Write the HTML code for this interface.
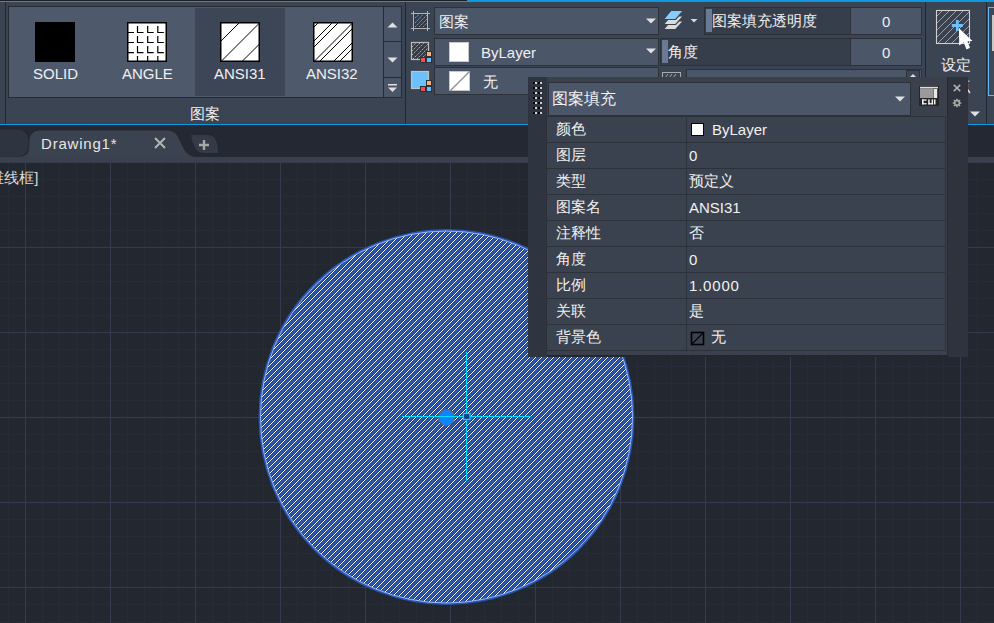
<!DOCTYPE html>
<html><head><meta charset="utf-8">
<style>
*{box-sizing:border-box;margin:0;padding:0}
html,body{width:994px;height:623px;overflow:hidden;background:#222730;font-family:"Liberation Sans",sans-serif;color:#f0f0f0}
.a{position:absolute}
.t{position:absolute;white-space:nowrap;line-height:1;font-size:15px}
#grid{left:0;top:162px;width:994px;height:461px;
background-image:
linear-gradient(to right,#353a4c 1px,transparent 1px),
linear-gradient(to bottom,#353a4c 1px,transparent 1px),
linear-gradient(to right,#272c39 1px,transparent 1px),
linear-gradient(to bottom,#262b37 1px,transparent 1px);
background-size:85px 85px,85px 85px,17px 17px,17px 17px;
background-position:25px 0px,25px 0px,8px 0px,8px 0px}
</style></head><body>
<!-- drawing area -->
<div id="grid" class="a"></div>
<div class="t" style="left:-30px;top:170px;font-size:15px;color:#dadada">[二维线框]</div>

<!-- hatch circle -->
<svg class="a" style="left:0;top:0" width="994" height="623">
 <defs>
  <pattern id="hp" patternUnits="userSpaceOnUse" width="6" height="6" x="0" y="0"><rect x="0" y="0" width="1" height="1" fill="#2752ac"/><rect x="0" y="1" width="1" height="1" fill="#2e5ec6"/><rect x="0" y="2" width="1" height="1" fill="#254ea5"/><rect x="0" y="3" width="1" height="1" fill="#143c94"/><rect x="0" y="4" width="1" height="1" fill="#ffffff"/><rect x="0" y="5" width="1" height="1" fill="#173f9a"/><rect x="1" y="0" width="1" height="1" fill="#2e5ec6"/><rect x="1" y="1" width="1" height="1" fill="#254ea5"/><rect x="1" y="2" width="1" height="1" fill="#143c94"/><rect x="1" y="3" width="1" height="1" fill="#ffffff"/><rect x="1" y="4" width="1" height="1" fill="#173f9a"/><rect x="1" y="5" width="1" height="1" fill="#2752ac"/><rect x="2" y="0" width="1" height="1" fill="#254ea5"/><rect x="2" y="1" width="1" height="1" fill="#143c94"/><rect x="2" y="2" width="1" height="1" fill="#ffffff"/><rect x="2" y="3" width="1" height="1" fill="#173f9a"/><rect x="2" y="4" width="1" height="1" fill="#2752ac"/><rect x="2" y="5" width="1" height="1" fill="#2e5ec6"/><rect x="3" y="0" width="1" height="1" fill="#143c94"/><rect x="3" y="1" width="1" height="1" fill="#ffffff"/><rect x="3" y="2" width="1" height="1" fill="#173f9a"/><rect x="3" y="3" width="1" height="1" fill="#2752ac"/><rect x="3" y="4" width="1" height="1" fill="#2e5ec6"/><rect x="3" y="5" width="1" height="1" fill="#254ea5"/><rect x="4" y="0" width="1" height="1" fill="#ffffff"/><rect x="4" y="1" width="1" height="1" fill="#173f9a"/><rect x="4" y="2" width="1" height="1" fill="#2752ac"/><rect x="4" y="3" width="1" height="1" fill="#2e5ec6"/><rect x="4" y="4" width="1" height="1" fill="#254ea5"/><rect x="4" y="5" width="1" height="1" fill="#143c94"/><rect x="5" y="0" width="1" height="1" fill="#173f9a"/><rect x="5" y="1" width="1" height="1" fill="#2752ac"/><rect x="5" y="2" width="1" height="1" fill="#2e5ec6"/><rect x="5" y="3" width="1" height="1" fill="#254ea5"/><rect x="5" y="4" width="1" height="1" fill="#143c94"/><rect x="5" y="5" width="1" height="1" fill="#ffffff"/></pattern>
  <clipPath id="cc"><circle cx="446.5" cy="417" r="186.5"/></clipPath>
 </defs>
 <rect x="250" y="220" width="400" height="400" fill="url(#hp)" clip-path="url(#cc)" shape-rendering="crispEdges"/>
 <circle cx="446.5" cy="417" r="187" fill="none" stroke="#2b56b0" stroke-width="2"/>
 <circle cx="446.5" cy="417" r="186" fill="none" stroke="#8fb8ff" stroke-width="1"/>
 <!-- crosshair -->
 <circle cx="446.5" cy="417.5" r="8" fill="#0a84ff" stroke="#6a6660" stroke-width="1"/>
 <g fill="#00e0ff">
  <rect x="402" y="416" width="129" height="1"/>
  <rect x="466" y="352" width="1" height="129"/>
 </g>
 <rect x="463.5" y="413.5" width="6.5" height="6" fill="#1d3a86" stroke="#00e0ff" stroke-width="1.2"/>
</svg>

<!-- tab bar -->
<div class="a" style="left:0;top:125px;width:994px;height:37px;background:#232833"></div>
<div class="a" style="left:0;top:157px;width:994px;height:5px;background:#3a414e"></div>
<svg class="a" style="left:0;top:125px" width="260" height="37">
 <path d="M-20 4.5 H16 Q28.5 4.5 28.5 18 Q28.5 31.8 16 31.8 H-20 Z" fill="#2e3440"/>
 <path d="M18 32 Q28 32 29 24 L29.5 15 Q30.5 5.5 40 5.5 H168 Q176 5.5 180 16 Q186 32 196 32 Z" fill="#3b4250"/>
 <path d="M191 10 H208 Q218 10 218 28 H204 Q194 28 191 10 Z" fill="#343a47"/>
</svg>
<div class="t" style="left:41px;top:136px;font-size:15px;letter-spacing:0.8px;color:#e6e6e6">Drawing1*</div>
<svg class="a" style="left:153px;top:136px" width="14" height="14"><path d="M2 2 L12 12 M12 2 L2 12" stroke="#b4b4b4" stroke-width="2"/></svg>
<svg class="a" style="left:198px;top:139px" width="12" height="12"><path d="M6 1 V11 M1 6 H11" stroke="#a8a8a8" stroke-width="2.4"/></svg>

<!-- ribbon -->

<div id="ribbon" class="a" style="left:0;top:0;width:994px;height:125px;background:#3b4452">
 <div class="a" style="left:0;top:0;width:467px;height:1px;background:#1d1f26"></div>
 <div class="a" style="left:467px;top:0;width:527px;height:1px;background:#0f98de"></div>
 <div class="a" style="left:0;top:1px;width:994px;height:1px;background:#0f98de"></div>
 <div class="a" style="left:0;top:124px;width:994px;height:1px;background:#0f98de"></div>
 <!-- panel separators -->
 <div class="a" style="left:5px;top:2px;width:1px;height:122px;background:#23272f"></div>
 <div class="a" style="left:405px;top:2px;width:1px;height:122px;background:#23272f"></div>
 <div class="a" style="left:925px;top:2px;width:1px;height:122px;background:#23272f"></div>
 <div class="a" style="left:986px;top:2px;width:1px;height:122px;background:#23272f"></div>
 <!-- gallery -->
 <div class="a" style="left:8px;top:6px;width:394px;height:92px;background:#262a33"></div>
 <div class="a" style="left:9px;top:7px;width:374px;height:90px;background:#4e5a6c"></div>
 <div class="a" style="left:195px;top:8px;width:90px;height:88px;background:#3d4656"></div>
 <div class="a" style="left:384px;top:7px;width:17px;height:34px;background:#4a5568"></div>
 <div class="a" style="left:384px;top:42px;width:17px;height:35px;background:#4a5568"></div>
 <div class="a" style="left:384px;top:78px;width:17px;height:19px;background:#4a5568"></div>
 <svg class="a" style="left:384px;top:7px" width="17" height="90">
  <path d="M3.5 20.5 L8.5 15.5 L13.5 20.5 Z" fill="#e0e0e0"/>
  <path d="M3.5 50.5 L8.5 55.5 L13.5 50.5 Z" fill="#e0e0e0"/>
  <rect x="4" y="77" width="9" height="1.5" fill="#e0e0e0"/>
  <path d="M4 80.5 L8.5 85 L13 80.5 Z" fill="#e0e0e0"/>
 </svg>
 <!-- gallery icons -->
 <div class="a" style="left:35px;top:22px;width:40px;height:40px;background:#000"></div>
 <svg class="a" style="left:127px;top:22px" width="40" height="40">
  <rect x="0.75" y="0.75" width="38.5" height="38.5" fill="#fff" stroke="#000" stroke-width="1.5"/>
  <g stroke="#000" stroke-width="1.2" fill="none">
   <path d="M10.5 4 V10.5 H16.5 M20.7 4 V10.5 H26.7 M30.8 4 V10.5 H36.8"/>
   <path d="M10.5 14 V20.5 H16.5 M20.7 14 V20.5 H26.7 M30.8 14 V20.5 H36.8"/>
   <path d="M10.5 24 V30.6 H16.5 M20.7 24 V30.6 H26.7 M30.8 24 V30.6 H36.8"/>
   <path d="M0 10.5 H7 M0 20.5 H7 M0 30.6 H7"/>
   <path d="M10.5 34 V40 M20.7 34 V40 M30.8 34 V40"/>
  </g>
 </svg>
 <svg class="a" style="left:220px;top:22px" width="40" height="40">
  <rect x="0.75" y="0.75" width="38.5" height="38.5" fill="#fff" stroke="#000" stroke-width="1.5"/>
  <g stroke="#000" stroke-width="1"><path d="M0.5 19.5 L19.5 0.5 M0.5 40 L40 0.5 M21.5 40 L40 21.5"/></g>
 </svg>
 <svg class="a" style="left:313px;top:22px" width="40" height="40">
  <rect x="0.75" y="0.75" width="38.5" height="38.5" fill="#fff" stroke="#000" stroke-width="1.5"/>
  <g stroke="#000" stroke-width="1"><path d="M0.5 5.5 L5.5 0.5 M0.5 19.5 L19.5 0.5 M0.5 25.5 L25.5 0.5 M0.5 40 L40 0.5 M6 40 L40 6 M20 40 L40 20 M26 40 L40 26"/></g>
 </svg>
 <div class="t" style="left:33px;top:66px">SOLID</div>
 <div class="t" style="left:122px;top:66px">ANGLE</div>
 <div class="t" style="left:214px;top:66px">ANSI31</div>
 <div class="t" style="left:306px;top:66px">ANSI32</div>
 <div class="t" style="left:190px;top:106px">图案</div>

 <!-- panel 2 -->
 <svg class="a" style="left:406px;top:6px" width="30" height="30" shape-rendering="crispEdges">
  <rect x="8" y="8" width="13" height="14" fill="#343a46"/>
  <g fill="#b4b4b4"><rect x="7" y="5" width="1" height="20"/><rect x="21" y="5" width="1" height="20"/><rect x="5" y="7" width="19" height="1"/><rect x="5" y="22" width="19" height="1"/></g>
 </svg>
 <svg class="a" style="left:406px;top:6px" width="30" height="30">
  <g stroke="#5ab0f0" stroke-width="1" stroke-dasharray="2 1"><path d="M9 12 L13 8.5 M9 17 L17 8.5 M9 21 L21 9 M13 21 L21 13 M17 21 L21 17"/></g>
 </svg>
 <div class="a" style="left:434px;top:7px;width:225px;height:28px;background:#2b3039"></div>
 <div class="a" style="left:435px;top:8px;width:223px;height:26px;background:#4b5669"></div>
 <div class="a" style="left:434px;top:38px;width:225px;height:28px;background:#2b3039"></div>
 <div class="a" style="left:435px;top:39px;width:223px;height:26px;background:#4b5669"></div>
 <div class="a" style="left:434px;top:67px;width:225px;height:28px;background:#2b3039"></div>
 <div class="a" style="left:435px;top:68px;width:223px;height:26px;background:#4b5669"></div>
 <svg class="a" style="left:600px;top:0" width="100" height="60">
  <path d="M46 18.5 L56 18.5 L51 23.5 Z" fill="#e0e0e0"/>
  <path d="M46 48.5 L56 48.5 L51 53.5 Z" fill="#e0e0e0"/>
  <path d="M90.5 19 L97.5 19 L94 22.5 Z" fill="#d8d8d8"/>
 </svg>
 <div class="t" style="left:439px;top:14px">图案</div>
 <div class="a" style="left:449px;top:42px;width:20px;height:20px;background:#fff;border:1px solid #c8c8c8"></div>
 <div class="t" style="left:481px;top:45px">ByLayer</div>
 <svg class="a" style="left:449px;top:71px" width="22" height="21">
  <rect x="0.5" y="0.5" width="20" height="19" fill="#fff" stroke="#c8c8c8"/>
  <path d="M1 20 L21 0" stroke="#8a8a8a" stroke-width="1.2"/>
 </svg>
 <div class="t" style="left:483px;top:74px">无</div>
 <!-- left icons row 2/3 -->
 <svg class="a" style="left:406px;top:37px" width="30" height="30">
  <rect x="5.5" y="5.5" width="17" height="17" fill="#363b45" stroke="#bcbcbc" stroke-width="1.2"/>
  <g stroke="#c8c8c8" stroke-width="0.9" stroke-dasharray="1.5 1"><path d="M6 10 L10 6 M6 14 L14 6 M6 18 L18 6 M7 22 L22 7 M11 22 L22 11 M15 22 L22 15"/></g>
  <g stroke="#2a2f38" stroke-width="1">
  <rect x="20.5" y="14.5" width="5" height="5" fill="#f5b078"/>
  <rect x="14.5" y="20.5" width="5" height="5" fill="#f05050"/>
  <rect x="20.5" y="20.5" width="5" height="5" fill="#64befc"/></g>
 </svg>
 <svg class="a" style="left:406px;top:66px" width="30" height="30">
  <rect x="5.5" y="5.5" width="17" height="17" fill="#6cc0fc" stroke="#c4c4c4" stroke-width="1.2"/>
  <g stroke="#2a2f38" stroke-width="1">
  <rect x="20.5" y="14.5" width="5" height="5" fill="#f5b078"/>
  <rect x="14.5" y="20.5" width="5" height="5" fill="#f05050"/>
  <rect x="20.5" y="20.5" width="5" height="5" fill="#64befc"/></g>
 </svg>
 <!-- layers icon -->
 <svg class="a" style="left:660px;top:6px" width="40" height="28">
  <g stroke="#3b4452" stroke-width="1.2">
  <path d="M10.8 15 H23.5 L15.7 23.5 H3.3 Z" fill="#dcdcdc"/>
  <path d="M10.8 10 H23.5 L15.7 18.5 H3.3 Z" fill="#dcdcdc"/>
  <path d="M10.8 4.5 H23.5 L15.7 13.5 H3.3 Z" fill="#88ccfa"/>
  </g>
 </svg>
 <!-- sliders -->
 <div class="a" style="left:704px;top:7px;width:218px;height:28px;background:#2b3039"></div>
 <div class="a" style="left:705px;top:8px;width:145px;height:26px;background:#373e4b"></div>
 <div class="a" style="left:851px;top:8px;width:70px;height:26px;background:#4b5669"></div>
 <div class="a" style="left:706px;top:9px;width:6px;height:23px;background:#6b7a94"></div>
 <div class="t" style="left:712px;top:13px">图案填充透明度</div>
 <div class="t" style="left:882px;top:14px">0</div>
 <div class="a" style="left:660px;top:38px;width:262px;height:28px;background:#2b3039"></div>
 <div class="a" style="left:661px;top:39px;width:189px;height:26px;background:#373e4b"></div>
 <div class="a" style="left:851px;top:39px;width:70px;height:26px;background:#4b5669"></div>
 <div class="a" style="left:662px;top:40px;width:6px;height:23px;background:#6b7a94"></div>
 <div class="t" style="left:668px;top:44px">角度</div>
 <div class="t" style="left:882px;top:45px">0</div>
 <svg class="a" style="left:661px;top:71px" width="22" height="8"><rect x="1.5" y="1.5" width="18" height="8" fill="none" stroke="#aaa"/><path d="M4 7 L7 3 M8 7 L11 3 M12 7 L15 3" stroke="#aaa"/></svg>
 <div class="a" style="left:686px;top:69px;width:236px;height:10px;background:#2b3039"></div>
 <div class="a" style="left:687px;top:70px;width:234px;height:9px;background:#4b5669"></div>
 <div class="a" style="left:906px;top:70px;width:14px;height:9px;background:#3e4757;border:1px solid #2b3039"></div>
 <svg class="a" style="left:906px;top:70px" width="14" height="9"><path d="M4 7 L7 4 L10 7 Z" fill="#ddd"/></svg>

 <!-- panel 3 -->
 <svg class="a" style="left:935px;top:9px" width="40" height="42">
  <rect x="1.5" y="1.5" width="33" height="33" fill="#3a4150" stroke="#d0d0d0" stroke-width="1.1"/>
  <g stroke="#b4b4b4" stroke-width="0.85"><path d="M2 7 L7 2 M2 14 L14 2 M2 21 L21 2 M2 28 L28 2 M3 34 L34 3 M10 34 L34 10 M17 34 L34 17 M24 34 L34 24 M31 34 L34 31"/></g>
  <path d="M16.8 16.5 H27.8 M22.3 11 V22" stroke="#6ec0f8" stroke-width="2.8"/>
  <path d="M24 19.3 L24.2 36.5 L28.7 33.3 L31.5 40.5 L35 38.8 L32.3 32.3 L37.5 32.1 Z" fill="#fff"/>
 </svg>
 <div class="t" style="left:941px;top:57px">设定</div>
 <div class="t" style="left:941px;top:78px">原点</div>
 <svg class="a" style="left:968px;top:108px" width="14" height="10"><path d="M2 3.5 L12 3.5 L7 8.5 Z" fill="#e0e0e0"/></svg>
 <!-- panel 4 -->
 <div class="a" style="left:988px;top:7px;width:10px;height:89px;border:1px solid #62b4f4;background:#3d4858"></div>
 <div class="a" style="left:992px;top:15px;width:4px;height:36px;background:#c8c8c8"></div>
</div>

<!-- properties palette -->
<div id="pal" class="a" style="left:0;top:0">
 <div class="a" style="left:528px;top:77px;width:19px;height:280px;background:#2f3540"></div>
 <div class="a" style="left:547px;top:77px;width:400px;height:278px;background:#3a414d"></div>
 <div class="a" style="left:947px;top:77px;width:1px;height:280px;background:#262a32"></div>
 <div class="a" style="left:547px;top:355px;width:401px;height:2px;background:#212630"></div>
 <div class="a" style="left:948px;top:77px;width:20px;height:280px;background:#2e333d"></div>
 <svg class="a" style="left:530px;top:80px" width="16" height="36">
  <rect x="3" y="2" width="2" height="2" fill="#000"/><rect x="5" y="2" width="2" height="2" fill="#d0d0d0"/><rect x="8" y="2" width="2" height="2" fill="#000"/><rect x="10" y="2" width="2" height="2" fill="#d0d0d0"/><rect x="3" y="7" width="2" height="2" fill="#000"/><rect x="5" y="7" width="2" height="2" fill="#d0d0d0"/><rect x="8" y="7" width="2" height="2" fill="#000"/><rect x="10" y="7" width="2" height="2" fill="#d0d0d0"/><rect x="3" y="12" width="2" height="2" fill="#000"/><rect x="5" y="12" width="2" height="2" fill="#d0d0d0"/><rect x="8" y="12" width="2" height="2" fill="#000"/><rect x="10" y="12" width="2" height="2" fill="#d0d0d0"/><rect x="3" y="17" width="2" height="2" fill="#000"/><rect x="5" y="17" width="2" height="2" fill="#d0d0d0"/><rect x="8" y="17" width="2" height="2" fill="#000"/><rect x="10" y="17" width="2" height="2" fill="#d0d0d0"/><rect x="3" y="22" width="2" height="2" fill="#000"/><rect x="5" y="22" width="2" height="2" fill="#d0d0d0"/><rect x="8" y="22" width="2" height="2" fill="#000"/><rect x="10" y="22" width="2" height="2" fill="#d0d0d0"/><rect x="3" y="27" width="2" height="2" fill="#000"/><rect x="5" y="27" width="2" height="2" fill="#d0d0d0"/><rect x="8" y="27" width="2" height="2" fill="#000"/><rect x="10" y="27" width="2" height="2" fill="#d0d0d0"/><rect x="3" y="32" width="2" height="2" fill="#000"/><rect x="5" y="32" width="2" height="2" fill="#d0d0d0"/><rect x="8" y="32" width="2" height="2" fill="#000"/><rect x="10" y="32" width="2" height="2" fill="#d0d0d0"/>
 </svg>
 <div class="a" style="left:548px;top:82px;width:363px;height:34px;background:#2b3039"></div>
 <div class="a" style="left:549px;top:83px;width:361px;height:32px;background:#4b5669"></div>
 <div class="t" style="left:552px;top:91px;font-size:16px">图案填充</div>
 <svg class="a" style="left:890px;top:90px" width="20" height="20"><path d="M5 6.5 L15 6.5 L10 11.5 Z" fill="#e0e0e0"/></svg>
 <svg class="a" style="left:919px;top:86px" width="20" height="20">
  <rect x="0" y="0" width="20" height="20" rx="1" fill="#262626"/>
  <rect x="1" y="0.8" width="18" height="1.6" fill="#dedede"/>
  <rect x="1" y="2.4" width="13.5" height="9.6" fill="#9a9a9a"/>
  <rect x="14.8" y="3" width="3.4" height="9" fill="#e6e6e6"/>
  <g fill="#f0f0f0">
   <rect x="3" y="13.4" width="1.6" height="5"/><rect x="3" y="13.4" width="4.6" height="1.3"/><rect x="3" y="17.1" width="4.6" height="1.3"/>
   <rect x="9.2" y="13.4" width="1.5" height="5"/><rect x="12.6" y="13.4" width="1.5" height="5"/><rect x="9.2" y="17.1" width="4.9" height="1.3"/>
   <rect x="15" y="13.4" width="1.5" height="5"/>
  </g>
 </svg>
 <svg class="a" style="left:952px;top:83px" width="12" height="26">
  <path d="M1.8 1.8 L8.2 8.2 M8.2 1.8 L1.8 8.2" stroke="#ababab" stroke-width="1.7"/>
  <circle cx="5" cy="20" r="2.3" fill="none" stroke="#a8a8a8" stroke-width="1.7"/>
  <path d="M7.90 20.00 L9.30 20.00 M7.05 22.05 L8.04 23.04 M5.00 22.90 L5.00 24.30 M2.95 22.05 L1.96 23.04 M2.10 20.00 L0.70 20.00 M2.95 17.95 L1.96 16.96 M5.00 17.10 L5.00 15.70 M7.05 17.95 L8.04 16.96 " stroke="#a8a8a8" stroke-width="1.6"/>
 </svg>
<div class="a" style="left:547px;top:116px;width:399px;height:26px;background:#2c313a"></div>
<div class="a" style="left:547px;top:117px;width:139px;height:25px;background:#3b424f"></div>
<div class="a" style="left:687px;top:117px;width:258px;height:25px;background:#3b424f"></div>
<div class="t" style="left:556px;top:121px">颜色</div>
<div class="a" style="left:691px;top:123px;width:13px;height:13px;background:#fff;border:1px solid #000"></div>
<div class="t" style="left:712px;top:122px">ByLayer</div>
<div class="a" style="left:547px;top:142px;width:399px;height:26px;background:#2c313a"></div>
<div class="a" style="left:547px;top:143px;width:139px;height:25px;background:#3b424f"></div>
<div class="a" style="left:687px;top:143px;width:258px;height:25px;background:#3b424f"></div>
<div class="t" style="left:556px;top:147px">图层</div>
<div class="t" style="left:689px;top:148px">0</div>
<div class="a" style="left:547px;top:168px;width:399px;height:26px;background:#2c313a"></div>
<div class="a" style="left:547px;top:169px;width:139px;height:25px;background:#3b424f"></div>
<div class="a" style="left:687px;top:169px;width:258px;height:25px;background:#3b424f"></div>
<div class="t" style="left:556px;top:173px">类型</div>
<div class="t" style="left:689px;top:173px">预定义</div>
<div class="a" style="left:547px;top:194px;width:399px;height:26px;background:#2c313a"></div>
<div class="a" style="left:547px;top:195px;width:139px;height:25px;background:#3b424f"></div>
<div class="a" style="left:687px;top:195px;width:258px;height:25px;background:#3b424f"></div>
<div class="t" style="left:556px;top:199px">图案名</div>
<div class="t" style="left:689px;top:200px">ANSI31</div>
<div class="a" style="left:547px;top:220px;width:399px;height:26px;background:#2c313a"></div>
<div class="a" style="left:547px;top:221px;width:139px;height:25px;background:#3b424f"></div>
<div class="a" style="left:687px;top:221px;width:258px;height:25px;background:#3b424f"></div>
<div class="t" style="left:556px;top:225px">注释性</div>
<div class="t" style="left:689px;top:225px">否</div>
<div class="a" style="left:547px;top:246px;width:399px;height:26px;background:#2c313a"></div>
<div class="a" style="left:547px;top:247px;width:139px;height:25px;background:#3b424f"></div>
<div class="a" style="left:687px;top:247px;width:258px;height:25px;background:#3b424f"></div>
<div class="t" style="left:556px;top:251px">角度</div>
<div class="t" style="left:689px;top:252px">0</div>
<div class="a" style="left:547px;top:272px;width:399px;height:26px;background:#2c313a"></div>
<div class="a" style="left:547px;top:273px;width:139px;height:25px;background:#3b424f"></div>
<div class="a" style="left:687px;top:273px;width:258px;height:25px;background:#3b424f"></div>
<div class="t" style="left:556px;top:277px">比例</div>
<div class="t" style="left:689px;top:278px;letter-spacing:0.8px">1.0000</div>
<div class="a" style="left:547px;top:298px;width:399px;height:26px;background:#2c313a"></div>
<div class="a" style="left:547px;top:299px;width:139px;height:25px;background:#3b424f"></div>
<div class="a" style="left:687px;top:299px;width:258px;height:25px;background:#3b424f"></div>
<div class="t" style="left:556px;top:303px">关联</div>
<div class="t" style="left:689px;top:303px">是</div>
<div class="a" style="left:547px;top:324px;width:399px;height:26px;background:#2c313a"></div>
<div class="a" style="left:547px;top:325px;width:139px;height:25px;background:#3b424f"></div>
<div class="a" style="left:687px;top:325px;width:258px;height:25px;background:#3b424f"></div>
<div class="t" style="left:556px;top:329px">背景色</div>
<svg class="a" style="left:690px;top:331px" width="15" height="15"><rect x="1.5" y="1.5" width="12" height="12" fill="none" stroke="#000" stroke-width="1.6"/><path d="M2 13 L13 2" stroke="#000" stroke-width="1.1"/></svg>
<div class="t" style="left:711px;top:329px">无</div>
<div class="a" style="left:547px;top:350px;width:399px;height:1px;background:#2c313a"></div>
<div class="a" style="left:546px;top:116px;width:1px;height:235px;background:#2a2f38"></div>
</div>
</body></html>
